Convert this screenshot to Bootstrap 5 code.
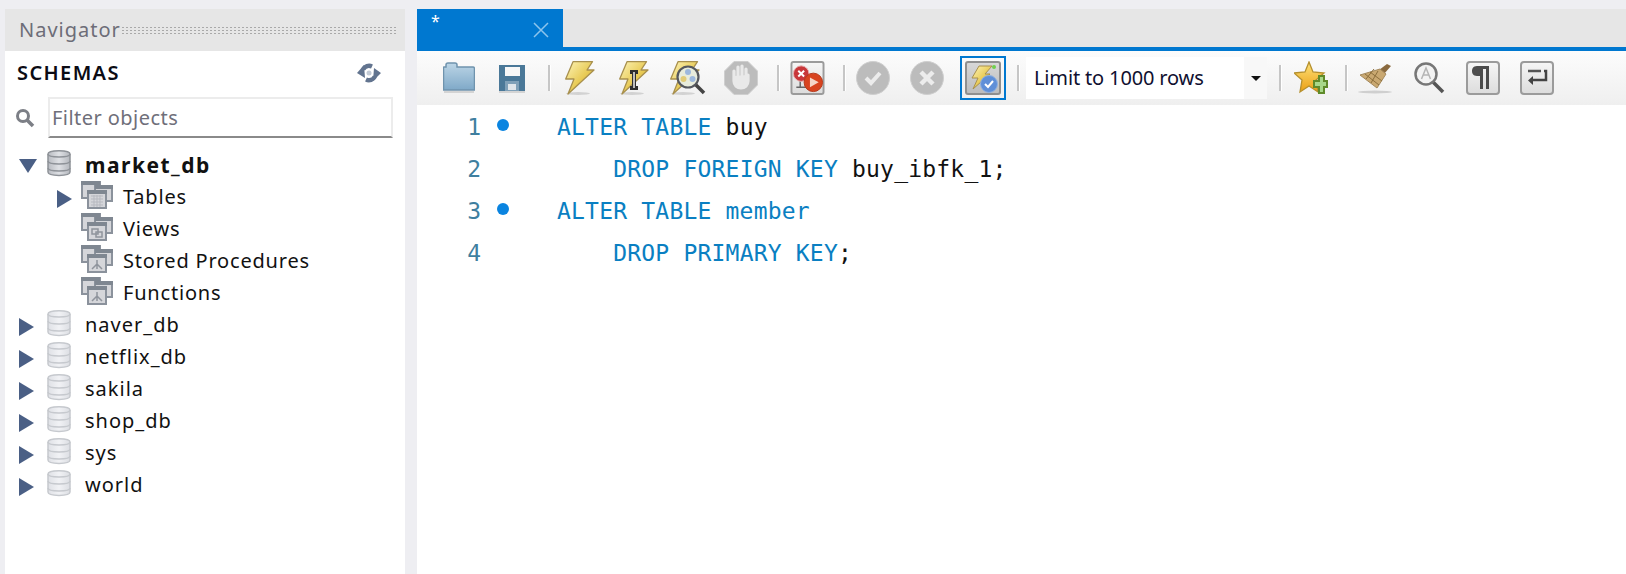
<!DOCTYPE html>
<html lang="en">
<head>
<meta charset="utf-8">
<title>Query</title>
<link href="https://cdn.jsdelivr.net/npm/bootstrap@5.3.0/dist/css/bootstrap.min.css" rel="stylesheet">
<style>
html,body{height:574px;overflow:hidden}
body{background:#eeeef2;font-family:"Noto Sans","Open Sans",sans-serif;font-size:20px;color:#111}
.wb-shell{height:574px;padding:9px 0 0 5px}
.nav-panel{width:400px;background:#fff}
.nav-head{height:42px;background:#e6e6e6;padding:0 9px 0 14px;color:#6d6d78;font-size:20px;letter-spacing:1px}
.nav-dots{height:9px;background-image:radial-gradient(circle,#a9a9a9 .8px,transparent 1px);background-size:4px 3px}
.schema-head{height:44px;margin-bottom:2px;padding:0 24px 0 12px;font-size:20px;font-weight:600;letter-spacing:1.4px;color:#0b0b14}
.filter-row{height:41px;padding-left:10px}
.filter-row .form-control{width:345px;height:41px;margin-left:13px;margin-right:12px;padding:0 2px;border-radius:0;border:2px solid #ececec;border-bottom-color:#8a8a8a;font-size:20px;letter-spacing:.45px;color:#222;font-family:inherit}
.filter-row .form-control::placeholder{color:#6f6f7a;opacity:1}
.tree-list{padding-top:11px}
.tree-row{height:32px;padding-left:14px;line-height:32px;white-space:nowrap;letter-spacing:.8px}
.tree-row.sub{padding-left:52px}
.tree-row .twist{width:28px;flex:none}
.tree-row.sub .twist{width:24px}
.db-ico{width:24px;height:28px;flex:none;margin-right:14px}
.grp-ico{width:32px;height:28px;flex:none;margin-right:10px}
.db-name{letter-spacing:1px}
.db-name.open{font-weight:700;font-size:21px;letter-spacing:1.5px;line-height:33px}
.main-panel{margin-left:12px;min-width:0;background:#fff}
.tab-strip{height:38px;background:#e6e6e6}
.query-tab{width:146px;background:#0078d0;color:#fff;font-size:16px;line-height:16px;padding:4px 14px 0 14px}
.tab-close{width:16px;height:16px;margin:9px 0 0 auto}
.tab-line{height:4px;background:#0078d0}
.tool-bar{height:54px;padding-left:26px;background:linear-gradient(#fcfcfc,#efefef)}
.tool-sep{width:2px;height:26px;flex:none;background:#c6c6c6;box-shadow:1px 0 0 #fff}
.tool-ico{height:34px;flex:none}
.t-folder{width:32px}
.t-save{width:26px;margin-left:24px}
.t-bolt{width:30px;margin-left:15px}
.t-bolt2{width:30px;margin-left:24px}
.t-bolt3{width:36px;margin-left:21px}
.t-stop{width:34px;margin-left:18px}
.t-rollback{width:35px;margin-left:11px}
.t-check{width:34px;margin-left:11px}
.t-cross{width:34px;margin-left:20px}
.t-star{width:34px;margin-left:13px}
.t-broom{width:34px;margin-left:11px}
.t-find{width:31px;margin-left:22px}
.t-para{width:34px;margin-left:21px}
.t-wrap{width:34px;margin-left:20px}
.sep-a{margin-left:23px}
.sep-b{margin-left:19px}
.sep-c{margin-left:18px}
.sep-d{margin-left:11px}
.sep-e{margin-left:12px}
.sep-f{margin-left:17px}
.auto-box{width:46px;height:44px;flex:none;margin-left:16px;border:2px solid #0078d0;padding:3px 3px}
.auto-box svg{width:36px;height:34px;display:block}
.limit-combo{width:241px;height:42px;flex:none;margin-left:7px;background:#fff;padding-left:8px;font-size:20px;letter-spacing:-.15px;color:#101030}
.limit-drop{width:23px;height:100%;margin-left:auto;background:#f8f8f8}
.limit-caret{width:0;height:0;border-left:5px solid transparent;border-right:5px solid transparent;border-top:5px solid #111}
.code-pane{padding-top:1px}
.code-line{height:42px;line-height:42px;font-family:"DejaVu Sans Mono",monospace;font-size:23px;letter-spacing:.2px;white-space:pre}
.line-no{width:64px;flex:none;text-align:right;color:#3f7f9f;letter-spacing:0}
.stmt-dot{width:12px;flex:none;margin-left:16px;margin-top:-4px}
.stmt-dot svg{width:12px;height:12px;display:block}
.code-text{margin-left:48px;color:#111}
.kw{color:#0a7fc2}
.icon-defs{position:absolute;width:0;height:0}
.twist-svg{display:block;margin-top:9px}
.twist-open{display:block;margin-top:10px}
</style>
</head>
<body>
<svg class="icon-defs" aria-hidden="true">
<defs>
<linearGradient id="gDb" x1="0" x2="1" y1="0" y2="0"><stop offset="0" stop-color="#dfe1e6"/><stop offset=".5" stop-color="#f1f2f5"/><stop offset="1" stop-color="#dcdee3"/></linearGradient>
<linearGradient id="gDbA" x1="0" x2="1" y1="0" y2="0"><stop offset="0" stop-color="#b9bcc2"/><stop offset=".5" stop-color="#dfe1e5"/><stop offset="1" stop-color="#b4b7bd"/></linearGradient>
<linearGradient id="gFolder" x1="0" x2="0" y1="0" y2="1"><stop offset="0" stop-color="#bcd5e6"/><stop offset="1" stop-color="#7fa9c8"/></linearGradient>
<linearGradient id="gBolt" x1="0" x2="1" y1="0" y2="1"><stop offset="0" stop-color="#fdf4b8"/><stop offset=".55" stop-color="#e8ca55"/><stop offset="1" stop-color="#c9a83a"/></linearGradient>
<linearGradient id="gStar" x1="0" x2="0" y1="0" y2="1"><stop offset="0" stop-color="#fde27a"/><stop offset="1" stop-color="#eb9f14"/></linearGradient>
<linearGradient id="gBtn" x1="0" x2="0" y1="0" y2="1"><stop offset="0" stop-color="#f6f6f6"/><stop offset="1" stop-color="#dcdcdc"/></linearGradient>
<linearGradient id="gAuto" x1="0" x2="0" y1="0" y2="1"><stop offset="0" stop-color="#d8d8d8"/><stop offset="1" stop-color="#bcbcbc"/></linearGradient>
<symbol id="down" viewBox="0 0 18 14"><path d="M0 0H18L9 14Z" fill="#4a5f85"/></symbol>
<symbol id="right" viewBox="0 0 15 18"><path d="M0 0L15 9L0 18Z" fill="#4a5f85"/></symbol>
<symbol id="db" viewBox="0 0 24 28"><path d="M1 5C1 .5 23 .5 23 5V23C23 27.500 1 27.500 1 23Z" fill="url(#gDb)" stroke="#c6c9ce" stroke-width="1.500"/><path d="M1 5C1 9 23 9 23 5M1 12C1 16 23 16 23 12M1 19C1 23 23 23 23 19" fill="none" stroke="#c6c9ce" stroke-width="1.500"/></symbol>
<symbol id="dbA" viewBox="0 0 24 28"><path d="M1 5C1 .5 23 .5 23 5V23C23 27.500 1 27.500 1 23Z" fill="url(#gDbA)" stroke="#8e9298" stroke-width="1.500"/><path d="M1 5C1 9 23 9 23 5M1 12C1 16 23 16 23 12M1 19C1 23 23 23 23 19" fill="none" stroke="#8e9298" stroke-width="1.500"/></symbol>
<symbol id="grpT" viewBox="0 0 32 28"><g stroke="#8b929c" stroke-width="2" fill="#d5d6da"><rect x="1" y="1" width="18" height="16"/><rect x="14" y="5" width="17" height="15"/><rect x="7" y="10" width="18" height="17"/></g><path d="M0 0H19V4H0ZM14 4H32V8H14ZM6 9H26V13H6Z" fill="#7f8791"/><path d="M10 15H22M10 18H22M10 21H22M10 24H22M13 14V26M16 14V26M19 14V26" stroke="#b7b9c0"/></symbol>
<symbol id="grpV" viewBox="0 0 32 28"><g stroke="#8b929c" stroke-width="2" fill="#d5d6da"><rect x="1" y="1" width="18" height="16"/><rect x="14" y="5" width="17" height="15"/><rect x="7" y="10" width="18" height="17"/></g><path d="M0 0H19V4H0ZM14 4H32V8H14ZM6 9H26V13H6Z" fill="#7f8791"/><rect x="11" y="16" width="6" height="5" fill="none" stroke="#8f949c" stroke-width="1.500"/><rect x="15" y="19" width="6" height="5" fill="none" stroke="#8f949c" stroke-width="1.500"/></symbol>
<symbol id="grpF" viewBox="0 0 32 28"><g stroke="#8b929c" stroke-width="2" fill="#d5d6da"><rect x="1" y="1" width="18" height="16"/><rect x="14" y="5" width="17" height="15"/><rect x="7" y="10" width="18" height="17"/></g><path d="M0 0H19V4H0ZM14 4H32V8H14ZM6 9H26V13H6Z" fill="#7f8791"/><path d="M16 15V19M16 19L11 24M16 19V24M16 19L21 24" fill="none" stroke="#8f949c" stroke-width="1.500"/></symbol>
<symbol id="boltP" viewBox="0 0 30 34"><ellipse cx="13" cy="32.500" rx="12" ry="1.500" fill="#000" opacity=".13"/><path d="M8 .7H27.500L22 9H29L3 33L9 18H.7Z" fill="url(#gBolt)" stroke="#a8904e" stroke-width="1.300" stroke-linejoin="round"/></symbol>
</defs>
</svg>
<div class="wb-shell d-flex">
  <aside class="nav-panel d-flex flex-column flex-shrink-0">
    <div class="nav-head d-flex align-items-center"><span>Navigator</span><div class="nav-dots flex-grow-1"></div></div>
    <div class="schema-head d-flex align-items-center justify-content-between">
      <span>SCHEMAS</span>
      <svg width="24" height="20" viewBox="0 0 24 20"><path d="M6 6.500A7 7 0 0 1 15 3.500M18 13.500A7 7 0 0 1 9 16.500" fill="none" stroke="#62748f" stroke-width="4.500"/><path d="M7 2L0 10L8 15ZM17 5L24 10L16 18Z" fill="#62748f"/><circle cx="12" cy="10" r="2.500" fill="#c3cbd6"/></svg>
    </div>
    <div class="filter-row d-flex align-items-center">
      <svg width="20" height="20" viewBox="0 0 20 20" fill="none" stroke="#7c7f86"><circle cx="8" cy="8" r="5.500" stroke-width="3"/><path d="M12 12L18 18" stroke-width="3.500"/></svg>
      <input class="form-control" type="text" placeholder="Filter objects">
    </div>
    <div class="tree-list">
      <div class="tree-row d-flex"><span class="twist"><svg width="18" height="14" class="twist-open"><use href="#down"/></svg></span><svg class="db-ico"><use href="#dbA"/></svg><span class="db-name open">market_db</span></div>
      <div class="tree-row sub d-flex"><span class="twist"><svg width="15" height="18" class="twist-svg"><use href="#right"/></svg></span><svg class="grp-ico"><use href="#grpT"/></svg><span>Tables</span></div>
      <div class="tree-row sub d-flex"><span class="twist"></span><svg class="grp-ico"><use href="#grpV"/></svg><span>Views</span></div>
      <div class="tree-row sub d-flex"><span class="twist"></span><svg class="grp-ico"><use href="#grpF"/></svg><span>Stored Procedures</span></div>
      <div class="tree-row sub d-flex"><span class="twist"></span><svg class="grp-ico"><use href="#grpF"/></svg><span>Functions</span></div>
      <div class="tree-row d-flex"><span class="twist"><svg width="15" height="18" class="twist-svg"><use href="#right"/></svg></span><svg class="db-ico"><use href="#db"/></svg><span class="db-name">naver_db</span></div>
      <div class="tree-row d-flex"><span class="twist"><svg width="15" height="18" class="twist-svg"><use href="#right"/></svg></span><svg class="db-ico"><use href="#db"/></svg><span class="db-name">netflix_db</span></div>
      <div class="tree-row d-flex"><span class="twist"><svg width="15" height="18" class="twist-svg"><use href="#right"/></svg></span><svg class="db-ico"><use href="#db"/></svg><span class="db-name">sakila</span></div>
      <div class="tree-row d-flex"><span class="twist"><svg width="15" height="18" class="twist-svg"><use href="#right"/></svg></span><svg class="db-ico"><use href="#db"/></svg><span class="db-name">shop_db</span></div>
      <div class="tree-row d-flex"><span class="twist"><svg width="15" height="18" class="twist-svg"><use href="#right"/></svg></span><svg class="db-ico"><use href="#db"/></svg><span class="db-name">sys</span></div>
      <div class="tree-row d-flex"><span class="twist"><svg width="15" height="18" class="twist-svg"><use href="#right"/></svg></span><svg class="db-ico"><use href="#db"/></svg><span class="db-name">world</span></div>
    </div>
  </aside>
  <main class="main-panel flex-grow-1 d-flex flex-column">
    <div class="tab-strip d-flex">
      <div class="query-tab d-flex"><span>*</span>
        <svg class="tab-close" viewBox="0 0 16 16"><path d="M1 1L15 15M15 1L1 15" stroke="#8cc4ec" stroke-width="1.500"/></svg>
      </div>
    </div>
    <div class="tab-line"></div>
    <div class="tool-bar d-flex align-items-center">
      <svg class="tool-ico t-folder" viewBox="0 0 32 34"><path d="M1 6H3V4C3 3 4 2 5 2H12C13 2 14 3 14 4V6H30C31 6 31.500 7 31.500 8V29H.5V8C.5 7 0 6 1 6Z" fill="url(#gFolder)" stroke="#6f93ad" stroke-width="1.500"/><rect x="1" y="30" width="30" height="2" fill="#000" opacity=".12"/></svg>
      <svg class="tool-ico t-save" viewBox="0 0 26 34"><rect x="0" y="4" width="26" height="26" fill="#4a7898"/><rect x="6" y="6" width="15" height="9" fill="#f7f7f7"/><rect x="6" y="20" width="14" height="10" fill="#7fa0b8"/><rect x="9" y="23" width="8" height="6" fill="#dfe5ea"/><rect x="0" y="30" width="26" height="2" fill="#000" opacity=".12"/></svg>
      <div class="tool-sep sep-a"></div>
      <svg class="tool-ico t-bolt"><use href="#boltP"/></svg>
      <svg class="tool-ico t-bolt2" viewBox="0 0 30 34"><use href="#boltP" width="30" height="34"/><path d="M11 11H19M11 27H19M15 11V27" stroke="#2e2e2e" stroke-width="4"/><path d="M15 11V27" stroke="#eee" stroke-width="1.500"/></svg>
      <svg class="tool-ico t-bolt3" viewBox="0 0 36 34"><use href="#boltP" width="30" height="34"/><path d="M25 23L34 32" stroke="#444" stroke-width="3.500"/><circle cx="18" cy="16" r="10.500" fill="#e8ecdc" stroke="#55585e" stroke-width="2.200"/><circle cx="18" cy="11" r="3" fill="#9db8dd"/><circle cx="13.500" cy="18" r="3" fill="#e2cc78"/><circle cx="22.500" cy="18" r="3" fill="#9db8dd"/></svg>
      <svg class="tool-ico t-stop" viewBox="0 0 34 34"><path d="M10 0.500H24L33.500 10V24L24 33.500H10L.5 24V10Z" fill="#bcbcbc" stroke="#cfcfcf"/><path d="M10 17V10M14 17V6M18 17V5M22 17V8M10 15V20C10 24 13 27 17 27C21 27 24 24 24 20V14" stroke="#e9e9e9" stroke-width="3.200" fill="#e9e9e9" stroke-linecap="round"/></svg>
      <div class="tool-sep sep-b"></div>
      <svg class="tool-ico t-rollback" viewBox="0 0 35 35"><rect x="1" y="1" width="33" height="33" rx="2" fill="url(#gBtn)" stroke="#9b9b9b" stroke-width="2"/><path d="M10 19V27H18M13 27H6" fill="none" stroke="#666" stroke-width="1.500"/><circle cx="11" cy="13" r="8" fill="#c8373a" stroke="#e8b5b5"/><path d="M8 10L14 16M14 10L8 16" stroke="#fff" stroke-width="2"/><circle cx="23.500" cy="22" r="9.500" fill="#d8431f" stroke="#b53a1d"/><path d="M20 17L29 22L20 27Z" fill="#f5d5c8"/></svg>
      <div class="tool-sep sep-c"></div>
      <svg class="tool-ico t-check" viewBox="0 0 34 34"><circle cx="17" cy="17" r="16.500" fill="#bcbcbc" stroke="#cfcfcf"/><path d="M10 17L15 22L24 12" fill="none" stroke="#ececec" stroke-width="4"/></svg>
      <svg class="tool-ico t-cross" viewBox="0 0 34 34"><circle cx="17" cy="17" r="16.500" fill="#bcbcbc" stroke="#cfcfcf"/><path d="M11 11L23 23M23 11L11 23" fill="none" stroke="#ececec" stroke-width="4.500"/></svg>
      <div class="auto-box">
        <svg viewBox="0 0 36 34"><rect x="1" y="1" width="34" height="32" rx="2" fill="url(#gAuto)" stroke="#8f8f8f" stroke-width="2"/><path d="M14 5H27L20 13H25L8 28L13 17H7Z" fill="url(#gBolt)" stroke="#a8904e"/><circle cx="29" cy="6" r="2" fill="#6fcf4f"/><circle cx="24" cy="23" r="8.500" fill="#5f8fd8" stroke="#8fb0e0"/><path d="M20 23L23 26L28 20" fill="none" stroke="#fff" stroke-width="2"/></svg>
      </div>
      <div class="tool-sep sep-d"></div>
      <div class="limit-combo d-flex align-items-center"><span>Limit to 1000 rows</span><div class="limit-drop d-flex align-items-center justify-content-center"><div class="limit-caret"></div></div></div>
      <div class="tool-sep sep-e"></div>
      <svg class="tool-ico t-star" viewBox="0 0 34 34"><path d="M15 1L19 11L30 12L22 19L24 31L15 25L6 31L8 19L0 12L11 11Z" fill="url(#gStar)" stroke="#b5902e" stroke-width="1.300"/><path d="M21 18H26V13H31V18H34V24H31V30H26V24H21Z" transform="translate(-1 2)" fill="#a8d88a" stroke="#5f8a2a" stroke-width="2"/></svg>
      <div class="tool-sep sep-f"></div>
      <svg class="tool-ico t-broom" viewBox="0 0 34 34"><ellipse cx="17" cy="31" rx="17" ry="1.500" fill="#000" opacity=".14"/><path d="M29 3L33 5L26 13L21 9Z" fill="#8a6a3f"/><path d="M22 8L28 13L19 27L2 14Z" fill="#c9a871" stroke="#a58a5f"/><path d="M7 13L21 24M12 11L24 20M13 22L20 10M8 18L16 8" stroke="#8d6f3d"/></svg>
      <svg class="tool-ico t-find" viewBox="0 0 31 34"><path d="M19 21L29 31" stroke="#555" stroke-width="3.500"/><circle cx="12" cy="13" r="10.500" fill="#f3f3f3" stroke="#777" stroke-width="2.500"/><path d="M7.500 18L12 7L16.500 18M9 14H15" fill="none" stroke="#b5b5b5" stroke-width="1.500"/></svg>
      <svg class="tool-ico t-para" viewBox="0 0 34 34"><rect x="1" y="1" width="32" height="32" rx="3" fill="url(#gBtn)" stroke="#9b9b9b" stroke-width="2"/><path d="M19 5H11C7 5 6 8 6 10C6 12 7 15 11 15H14V28H17V8H20V28H23V5Z" fill="#4c4c4c"/></svg>
      <svg class="tool-ico t-wrap" viewBox="0 0 34 34"><rect x="1" y="1" width="32" height="32" rx="3" fill="url(#gBtn)" stroke="#9b9b9b" stroke-width="2"/><path d="M8 10H21" stroke="#555" stroke-width="2.500"/><path d="M24 10H26V19H13" fill="none" stroke="#444" stroke-width="2.500"/><path d="M13 15L8 19.500L13 24Z" fill="#444"/></svg>
    </div>
    <div class="code-pane">
      <div class="code-line d-flex align-items-center"><span class="line-no">1</span><span class="stmt-dot"><svg viewBox="0 0 12 12"><circle cx="6" cy="6" r="6" fill="#0a84e0"/></svg></span><span class="code-text"><span class="kw">ALTER TABLE</span> buy</span></div>
      <div class="code-line d-flex align-items-center"><span class="line-no">2</span><span class="stmt-dot"></span><span class="code-text">    <span class="kw">DROP FOREIGN KEY</span> buy_ibfk_1;</span></div>
      <div class="code-line d-flex align-items-center"><span class="line-no">3</span><span class="stmt-dot"><svg viewBox="0 0 12 12"><circle cx="6" cy="6" r="6" fill="#0a84e0"/></svg></span><span class="code-text"><span class="kw">ALTER TABLE member</span></span></div>
      <div class="code-line d-flex align-items-center"><span class="line-no">4</span><span class="stmt-dot"></span><span class="code-text">    <span class="kw">DROP PRIMARY KEY</span>;</span></div>
    </div>
  </main>
</div>
<script src="https://cdn.jsdelivr.net/npm/bootstrap@5.3.0/dist/js/bootstrap.bundle.min.js"></script>
</body>
</html>
